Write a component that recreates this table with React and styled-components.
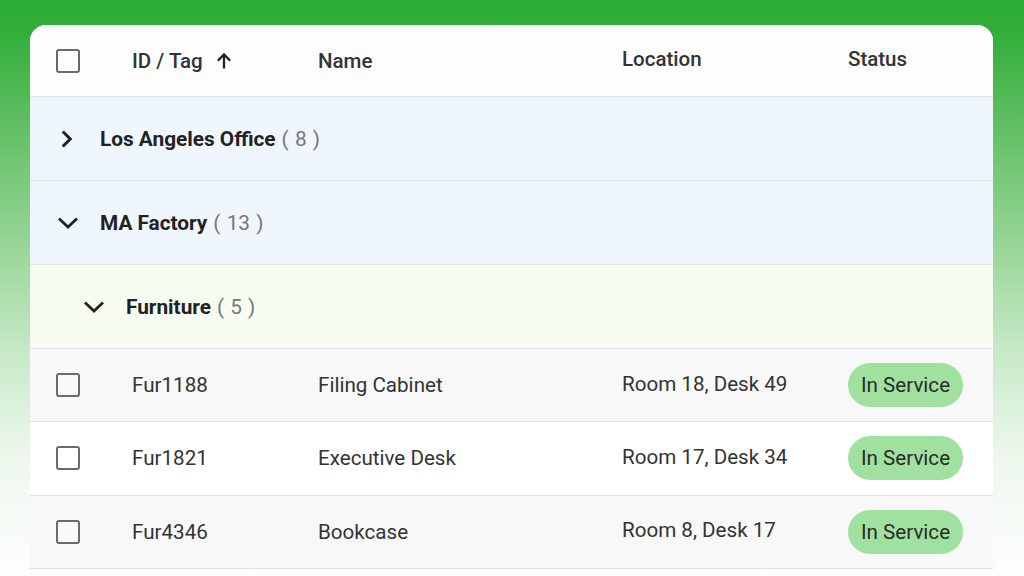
import React from "react";
import styled, { createGlobalStyle } from "styled-components";

const GlobalStyle = createGlobalStyle`
  html, body {
    margin: 0;
    padding: 0;
    height: 576px;
    overflow: hidden;
  }
  body {
    font-family: Roboto, "Liberation Sans", sans-serif;
    background: linear-gradient(180deg, #2ead36 0%, #30ae38 5%, #62c064 22%, #96d596 42%, #c9eac9 62%, #eef8ee 80%, #fdfefd 100%);
  }
`;

const columns = "102px 186px 304px 226px 1fr";

const Page = styled.div`
  padding: 25px 31px 0 30px;
`;

const Card = styled.div`
  background: #fff;
  border-radius: 16px 16px 0 0;
  overflow: hidden;
`;

const HeaderRow = styled.div`
  display: grid;
  grid-template-columns: ${columns};
  align-items: center;
  height: 71px;
  background: #fdfdfd;
  border-bottom: 1px solid #e2e4e8;
  font-size: 20.5px;
  font-weight: 500;
  color: #333;
`;

const HeadCell = styled.div`
  display: flex;
  align-items: center;
  gap: 12px;
  padding-left: ${(p) => p.$pad || 0}px;
  margin-top: ${(p) => (p.$up ? -4 : 0)}px;
`;

const GroupRow = styled.div`
  display: flex;
  align-items: center;
  height: 83px;
  padding-left: ${(p) => 26 + p.$level * 26}px;
  background: ${(p) => (p.$level ? "#f6fdf0" : "#f0f6fe")};
  border-bottom: 1px solid #dfe3e8;
  font-size: 20.8px;
  color: #222;
`;

const Toggle = styled.span`
  display: flex;
  width: 28px;
  height: 28px;
  margin: 0 18px 0 -2px;
  color: #222;
`;

const GroupName = styled.span`
  font-weight: 700;
`;

const Count = styled.span`
  color: #777;
  margin-left: 6px;
  word-spacing: 1px;
`;

const DataRow = styled.div`
  display: grid;
  grid-template-columns: ${columns};
  align-items: center;
  height: 72.3px;
  background: ${(p) => (p.$shade ? "#f8f8f8" : "#fff")};
  border-bottom: 1px solid #e2e2e2;
  font-size: 20.6px;
  color: #333;
`;

const Cell = styled.div`
  display: flex;
  align-items: center;
  padding-left: ${(p) => p.$pad || 0}px;
  margin-top: ${(p) => (p.$up ? -3 : 0)}px;
`;

const Box = styled.span`
  display: block;
  width: 20px;
  height: 20px;
  border: 2.5px solid #6a6a6a;
  border-radius: 3px;
`;

const Chip = styled.span`
  display: inline-flex;
  align-items: center;
  height: 44px;
  padding: 0 13px;
  border-radius: 22px;
  background: #a0e1a0;
  color: #2a2a2a;
`;

const ChevronRight = () => (
  <svg width="28" height="28" viewBox="0 0 28 28" fill="none" stroke="currentColor" strokeWidth="3" strokeLinecap="square">
    <path d="M9.8 7.5l6.5 6.5-6.5 6.5" />
  </svg>
);

const ChevronDown = () => (
  <svg width="28" height="28" viewBox="0 0 28 28" fill="none" stroke="currentColor" strokeWidth="2.8" strokeLinecap="square">
    <path d="M6 10.5l8 7.5 8-7.5" />
  </svg>
);

const ArrowUp = () => (
  <svg width="18" height="18" viewBox="0 0 18 18" fill="none" stroke="#222" strokeWidth="2.3">
    <path d="M9 16.5V2.5M2.8 8.7L9 2.5l6.2 6.2" />
  </svg>
);

const items = [
  { id: "Fur1188", name: "Filing Cabinet", location: "Room 18, Desk 49" },
  { id: "Fur1821", name: "Executive Desk", location: "Room 17, Desk 34" },
  { id: "Fur4346", name: "Bookcase", location: "Room 8, Desk 17" },
];

const Group = ({ level, open, name, count }) => (
  <GroupRow $level={level}>
    <Toggle>{open ? <ChevronDown /> : <ChevronRight />}</Toggle>
    <GroupName>{name}</GroupName>
    <Count>( {count} )</Count>
  </GroupRow>
);

export default function App() {
  return (
    <>
      <GlobalStyle />
      <Page>
        <Card>
          <HeaderRow>
            <HeadCell $pad={26}><Box /></HeadCell>
            <HeadCell>ID / Tag <ArrowUp /></HeadCell>
            <HeadCell>Name</HeadCell>
            <HeadCell $up>Location</HeadCell>
            <HeadCell $up>Status</HeadCell>
          </HeaderRow>
          <Group level={0} name="Los Angeles Office" count={8} />
          <Group level={0} open name="MA Factory" count={13} />
          <Group level={1} open name="Furniture" count={5} />
          {items.map((it, i) => (
            <DataRow key={it.id} $shade={i % 2 === 0}>
              <Cell $pad={26}><Box /></Cell>
              <Cell>{it.id}</Cell>
              <Cell>{it.name}</Cell>
              <Cell $up>{it.location}</Cell>
              <Cell><Chip>In Service</Chip></Cell>
            </DataRow>
          ))}
        </Card>
      </Page>
    </>
  );
}
